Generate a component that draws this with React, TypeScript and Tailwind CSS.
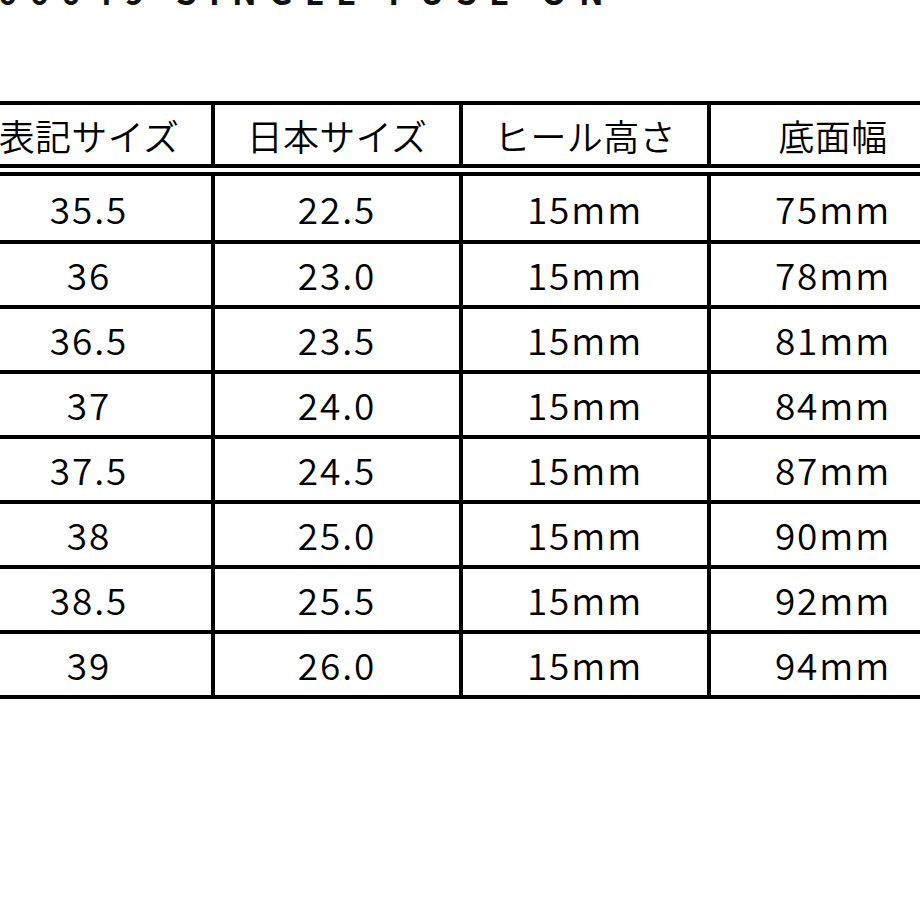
import React from "react";

const headers = ["表記サイズ", "日本サイズ", "ヒール高さ", "底面幅"];
const rows: string[][] = [
  ["35.5", "22.5", "15mm", "75mm"],
  ["36", "23.0", "15mm", "78mm"],
  ["36.5", "23.5", "15mm", "81mm"],
  ["37", "24.0", "15mm", "84mm"],
  ["37.5", "24.5", "15mm", "87mm"],
  ["38", "25.0", "15mm", "90mm"],
  ["38.5", "25.5", "15mm", "92mm"],
  ["39", "26.0", "15mm", "94mm"],
];

export default function App() {
  return (
    <div
      className="w-[920px] h-[920px] overflow-hidden bg-white text-black"
      style={{ fontFamily: '"Noto Sans CJK JP", "Noto Sans", sans-serif' }}
    >
      <div className="mt-[-24px] ml-[-2px] h-[30px] leading-[30px] text-[33px] font-bold tracking-[0.37em] whitespace-nowrap text-[#111]">
        00049 SINGLE FUSE ON
      </div>
      <div className="mt-[95px] ml-[-37px] w-[996px] border-t-4 border-black">
        <div className="flex border-x-4 border-black border-b-[12px] border-double">
          {headers.map((h, i) => (
            <div
              key={h}
              className={`h-[59px] flex items-center justify-center text-[36px] leading-none font-[350] tracking-[0.01em] ${
                i > 0 ? "w-[248px] border-l-4 border-black" : "w-[244px]"
              }`}
            >
              {h}
            </div>
          ))}
        </div>
        {rows.map((r, ri) => (
          <div key={ri} className="flex border-x-4 border-b-4 border-black">
            {r.map((c, ci) => (
              <div
                key={ci}
                className={`${ri === 0 ? "h-[64px]" : "h-[61px]"} flex items-center justify-center text-[37px] leading-none font-[350] tracking-[0.05em] ${
                  ci > 0 ? "w-[248px] border-l-4 border-black" : "w-[244px]"
                }`}
              >
                {c}
              </div>
            ))}
          </div>
        ))}
      </div>
    </div>
  );
}
